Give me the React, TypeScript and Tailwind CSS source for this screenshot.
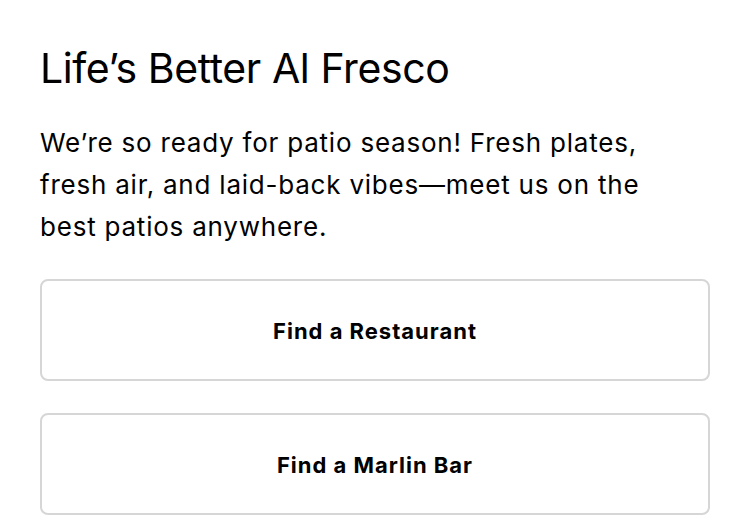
import React from 'react';

const links = ['Find a Restaurant', 'Find a Marlin Bar'];

export default function App() {
    return (
        <div className="min-h-screen bg-white px-10 pt-[40px] text-black" style={{ fontFamily: 'Inter, "Noto Sans", sans-serif' }}>
            <h2 className="text-[41px] leading-[56px] font-normal tracking-[-0.01em]">Life’s Better Al Fresco</h2>
            <p className="mt-[26px] max-w-[625px] text-[26px] leading-[42px] tracking-[0.03em]">
                We’re so ready for patio season! Fresh plates, fresh air, and laid-back vibes—meet us on the best patios anywhere.
            </p>
            <div className="mt-[31px] flex flex-col gap-[32px]">
                {links.map((label) => (
                    <a
                        key={label}
                        href="#"
                        className="flex h-[102px] items-center justify-center rounded-lg border-2 border-[#d6d6d6] pt-[3px] text-[22px] font-bold tracking-[0.045em]"
                    >
                        {label}
                    </a>
                ))}
            </div>
        </div>
    );
}
